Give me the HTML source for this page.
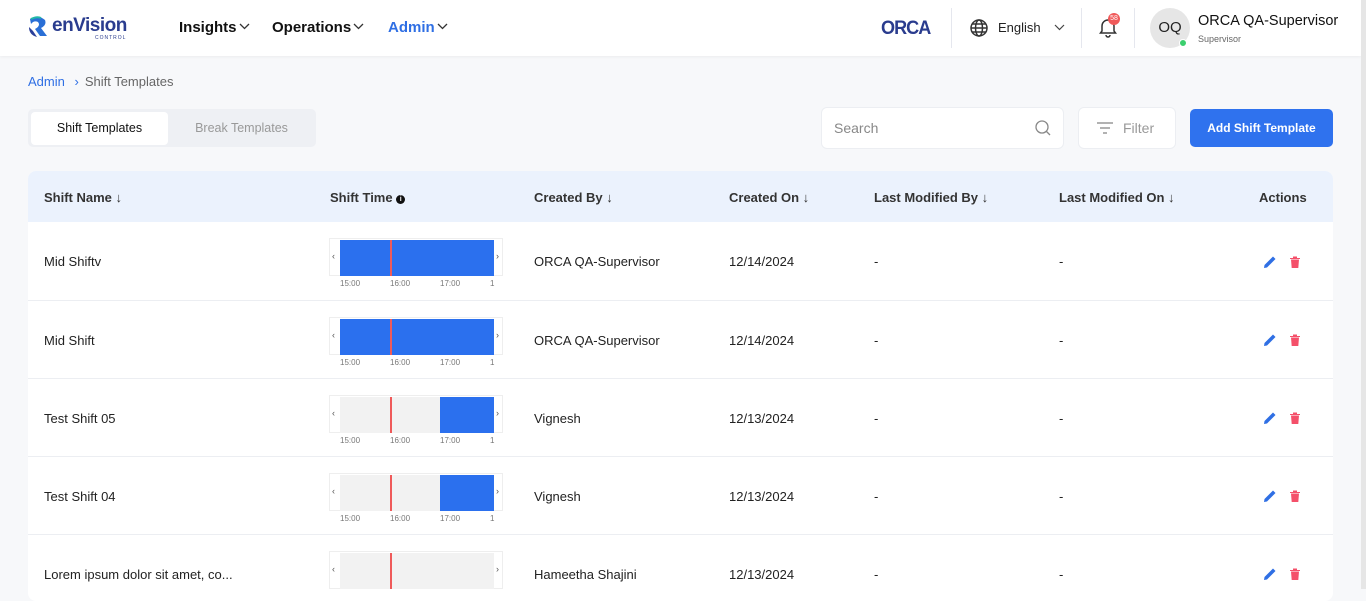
<!DOCTYPE html>
<html><head><meta charset="utf-8"><style>
*{box-sizing:border-box;margin:0;padding:0}
body{width:1366px;height:589px;overflow:hidden;background:#f7f8fa;font-family:"Liberation Sans",sans-serif;color:#222;position:relative}
.abs{position:absolute}
.hdr{left:0;top:0;width:1361px;height:56px;background:#fff;box-shadow:0 1px 3px rgba(0,0,0,.05)}
.nav{font-weight:bold;font-size:15px;top:19px;color:#111}
.nav svg{vertical-align:2px;margin-left:2px}
.sb{left:1361px;top:0;width:5px;height:589px;background:#e6e6e6}
.vsep{top:8px;width:1px;height:40px;background:#e5e7ee}
.card{left:28px;top:171px;width:1305px;height:430px;background:#fff;border-radius:8px;overflow:hidden}
.th{position:absolute;top:0;left:0;width:1305px;height:51px;background:#ebf2fd}
.th span{position:absolute;top:19px;font-size:13px;font-weight:bold;color:#333}
.row{position:absolute;left:0;width:1305px;height:78px;border-top:1px solid #eceef2}
.row .c{position:absolute;top:32px;font-size:13px;color:#222}
.tl{position:absolute;left:301px;top:16px;width:174px;height:38px;border:1px solid #eee;background:#fff}
.bar{position:absolute;left:10px;top:1px;width:154px;height:36px;background:#f2f2f2}
.blue{position:absolute;top:0;bottom:0;background:#2b70ee}
.red{position:absolute;left:50px;top:0;width:2px;height:36px;background:#ef5a5a}
.lb{position:absolute;top:40px;font-size:8px;color:#777}
.arr{position:absolute;top:12px;font-size:9px;color:#555}
</style></head><body>
<div class="abs hdr"></div>
<div class="abs sb"></div>
<svg class="abs" style="left:27px;top:15px" width="22" height="24" viewBox="0 0 22 24"><path d="M3 4 Q11 -1 18 5 Q20 10 14 13 L20 21 L13 21 L8 14 Q14 11 11 7 Q7 5 4 9 Z" fill="#2a6fd6"/><path d="M2 12 Q2 20 10 22 L6 16 Z" fill="#2a3f9a"/><path d="M4 4 Q10 1 14 3" stroke="#22b8a8" stroke-width="2" fill="none"/></svg>
<div class="abs" style="left:52px;top:15px;font-size:19px;font-weight:bold;color:#2a3c8e;letter-spacing:-.5px">enVision</div>
<div class="abs" style="left:95px;top:35px;font-size:5px;color:#2a3c8e;letter-spacing:1px">CONTROL</div>
<div class="abs nav" style="left:179px">Insights<svg width="11" height="7" viewBox="0 0 11 7"><path d="M1 1l4.5 4.5L10 1" stroke="#333" stroke-width="1.3" fill="none"/></svg></div>
<div class="abs nav" style="left:272px">Operations<svg width="11" height="7" viewBox="0 0 11 7"><path d="M1 1l4.5 4.5L10 1" stroke="#333" stroke-width="1.3" fill="none"/></svg></div>
<div class="abs nav" style="left:388px;color:#2f6fe4">Admin<svg width="11" height="7" viewBox="0 0 11 7"><path d="M1 1l4.5 4.5L10 1" stroke="#333" stroke-width="1.3" fill="none"/></svg></div>
<div class="abs" style="left:881px;top:18px;font-size:19px;font-weight:bold;color:#2a3c8e;letter-spacing:-1px;transform:scaleX(.95);transform-origin:left">ORCA</div>
<div class="abs vsep" style="left:951px"></div>
<svg class="abs" style="left:969px;top:18px" width="20" height="20" viewBox="0 0 20 20" fill="none" stroke="#333" stroke-width="1.5"><circle cx="10" cy="10" r="8"/><ellipse cx="10" cy="10" rx="3.5" ry="8"/><path d="M2 10h16M3.5 6h13M3.5 14h13"/></svg>
<div class="abs" style="left:998px;top:20px;font-size:13px">English</div>
<svg class="abs" style="left:1054px;top:24px" width="11" height="7" viewBox="0 0 11 7"><path d="M1 1l4.5 4.5L10 1" stroke="#444" stroke-width="1.2" fill="none"/></svg>
<div class="abs vsep" style="left:1081px"></div>
<svg class="abs" style="left:1098px;top:16px" width="20" height="22" viewBox="0 0 20 22" fill="none" stroke="#333" stroke-width="1.5"><path d="M4 15 V10 a6 6 0 0 1 12 0 V15 L17.5 17 H2.5 Z M8 19 a2 2 0 0 0 4 0"/></svg>
<div class="abs" style="left:1108px;top:13px;width:12px;height:12px;border-radius:6px;background:#f05a5a;color:#fff;font-size:7px;text-align:center;line-height:12px">58</div>
<div class="abs vsep" style="left:1134px"></div>
<div class="abs" style="left:1150px;top:8px;width:40px;height:40px;border-radius:20px;background:#e6e6e6;font-size:15px;text-align:center;line-height:40px;color:#222">OQ</div>
<div class="abs" style="left:1179px;top:39px;width:8px;height:8px;border-radius:4px;background:#3ccf6e;border:1px solid #fff"></div>
<div class="abs" style="left:1198px;top:13px;font-size:14.5px;color:#111">ORCA QA-Supervisor</div>
<div class="abs" style="left:1198px;top:34px;font-size:9px;color:#666">Supervisor</div>

<div class="abs" style="left:28px;top:74px;font-size:13px;color:#2f6fe4">Admin <span style="color:#2f6fe4;margin:0 6px">›</span><span style="color:#666">Shift Templates</span></div>

<div class="abs" style="left:28px;top:109px;width:288px;height:38px;background:#eef0f4;border-radius:5px"></div>
<div class="abs" style="left:31px;top:112px;width:137px;height:33px;background:#fff;border-radius:4px;font-size:12.5px;text-align:center;line-height:33px;color:#111">Shift Templates</div>
<div class="abs" style="left:170px;top:112px;width:143px;height:33px;font-size:12.5px;text-align:center;line-height:33px;color:#999">Break Templates</div>

<div class="abs" style="left:821px;top:107px;width:243px;height:42px;background:#fff;border:1px solid #eceef2;border-radius:6px"></div>
<div class="abs" style="left:834px;top:120px;font-size:14px;color:#888">Search</div>
<svg class="abs" style="left:1034px;top:119px" width="18" height="18" viewBox="0 0 18 18" fill="none" stroke="#888" stroke-width="1.3"><circle cx="8" cy="8" r="6"/><path d="M12.5 12.5L16 16"/></svg>
<div class="abs" style="left:1078px;top:107px;width:98px;height:42px;background:#fff;border:1px solid #eceef2;border-radius:6px"></div>
<svg class="abs" style="left:1096px;top:120px" width="18" height="16" viewBox="0 0 18 16" stroke="#999" stroke-width="1.4"><path d="M1 3h16M4 8h10M7 13h4"/></svg>
<div class="abs" style="left:1123px;top:120px;font-size:14px;color:#999">Filter</div>
<div class="abs" style="left:1190px;top:109px;width:143px;height:38px;background:#2f72ee;border-radius:5px;color:#fff;font-size:12px;font-weight:bold;text-align:center;line-height:38px">Add Shift Template</div>

<div class="abs card">
<div class="th">
<span style="left:16px">Shift Name ↓</span>
<span style="left:302px">Shift Time <b style="display:inline-block;width:9px;height:9px;border-radius:5px;background:#111;color:#fff;font-size:7px;text-align:center;line-height:9px;vertical-align:1px">i</b></span>
<span style="left:506px">Created By ↓</span>
<span style="left:701px">Created On ↓</span>
<span style="left:846px">Last Modified By ↓</span>
<span style="left:1031px">Last Modified On ↓</span>
<span style="left:1231px">Actions</span>
</div>
<div class="row" style="top:51px;border-top:none">
<div class="c" style="left:16px">Mid Shiftv</div>
<div class="tl"><span class="arr" style="left:2px">‹</span><span class="arr" style="left:166px">›</span><div class="bar"><div class="blue" style="left:0;width:154px"></div><div class="red"></div></div><span class="lb" style="left:10px">15:00</span><span class="lb" style="left:60px">16:00</span><span class="lb" style="left:110px">17:00</span><span class="lb" style="left:160px">1</span></div>
<div class="c" style="left:506px">ORCA QA-Supervisor</div><div class="c" style="left:701px">12/14/2024</div><div class="c" style="left:846px">-</div><div class="c" style="left:1031px">-</div>
</div>
<div class="row" style="top:129px">
<div class="c" style="left:16px">Mid Shift</div>
<div class="tl"><span class="arr" style="left:2px">‹</span><span class="arr" style="left:166px">›</span><div class="bar"><div class="blue" style="left:0;width:154px"></div><div class="red"></div></div><span class="lb" style="left:10px">15:00</span><span class="lb" style="left:60px">16:00</span><span class="lb" style="left:110px">17:00</span><span class="lb" style="left:160px">1</span></div>
<div class="c" style="left:506px">ORCA QA-Supervisor</div><div class="c" style="left:701px">12/14/2024</div><div class="c" style="left:846px">-</div><div class="c" style="left:1031px">-</div>
</div>
<div class="row" style="top:207px">
<div class="c" style="left:16px">Test Shift 05</div>
<div class="tl"><span class="arr" style="left:2px">‹</span><span class="arr" style="left:166px">›</span><div class="bar"><div class="blue" style="left:100px;width:54px"></div><div class="red"></div></div><span class="lb" style="left:10px">15:00</span><span class="lb" style="left:60px">16:00</span><span class="lb" style="left:110px">17:00</span><span class="lb" style="left:160px">1</span></div>
<div class="c" style="left:506px">Vignesh</div><div class="c" style="left:701px">12/13/2024</div><div class="c" style="left:846px">-</div><div class="c" style="left:1031px">-</div>
</div>
<div class="row" style="top:285px">
<div class="c" style="left:16px">Test Shift 04</div>
<div class="tl"><span class="arr" style="left:2px">‹</span><span class="arr" style="left:166px">›</span><div class="bar"><div class="blue" style="left:100px;width:54px"></div><div class="red"></div></div><span class="lb" style="left:10px">15:00</span><span class="lb" style="left:60px">16:00</span><span class="lb" style="left:110px">17:00</span><span class="lb" style="left:160px">1</span></div>
<div class="c" style="left:506px">Vignesh</div><div class="c" style="left:701px">12/13/2024</div><div class="c" style="left:846px">-</div><div class="c" style="left:1031px">-</div>
</div>
<div class="row" style="top:363px">
<div class="c" style="left:16px">Lorem ipsum dolor sit amet, co...</div>
<div class="tl"><span class="arr" style="left:2px">‹</span><span class="arr" style="left:166px">›</span><div class="bar"><div class="red"></div></div></div>
<div class="c" style="left:506px">Hameetha Shajini</div><div class="c" style="left:701px">12/13/2024</div><div class="c" style="left:846px">-</div><div class="c" style="left:1031px">-</div>
</div>
</div>
<svg width="0" height="0" style="position:absolute"><defs>
<symbol id="pen" viewBox="0 0 16 16"><path d="M2 14 L2.5 11 L11 2.5 L13.5 5 L5 13.5 Z" fill="#2f6fe4"/></symbol>
<symbol id="bin" viewBox="0 0 16 16"><path d="M3 4h10v1H3zM6 2.5h4v1.5H6zM4 5.5h8l-.7 8.5H4.7z" fill="#f4506a"/></symbol>
</defs></svg>
<svg class="abs" style="left:1262px;top:254px" width="16" height="16"><use href="#pen"/></svg><svg class="abs" style="left:1287px;top:254px" width="16" height="16"><use href="#bin"/></svg>
<svg class="abs" style="left:1262px;top:332px" width="16" height="16"><use href="#pen"/></svg><svg class="abs" style="left:1287px;top:332px" width="16" height="16"><use href="#bin"/></svg>
<svg class="abs" style="left:1262px;top:410px" width="16" height="16"><use href="#pen"/></svg><svg class="abs" style="left:1287px;top:410px" width="16" height="16"><use href="#bin"/></svg>
<svg class="abs" style="left:1262px;top:488px" width="16" height="16"><use href="#pen"/></svg><svg class="abs" style="left:1287px;top:488px" width="16" height="16"><use href="#bin"/></svg>
<svg class="abs" style="left:1262px;top:566px" width="16" height="16"><use href="#pen"/></svg><svg class="abs" style="left:1287px;top:566px" width="16" height="16"><use href="#bin"/></svg>
</body></html>
